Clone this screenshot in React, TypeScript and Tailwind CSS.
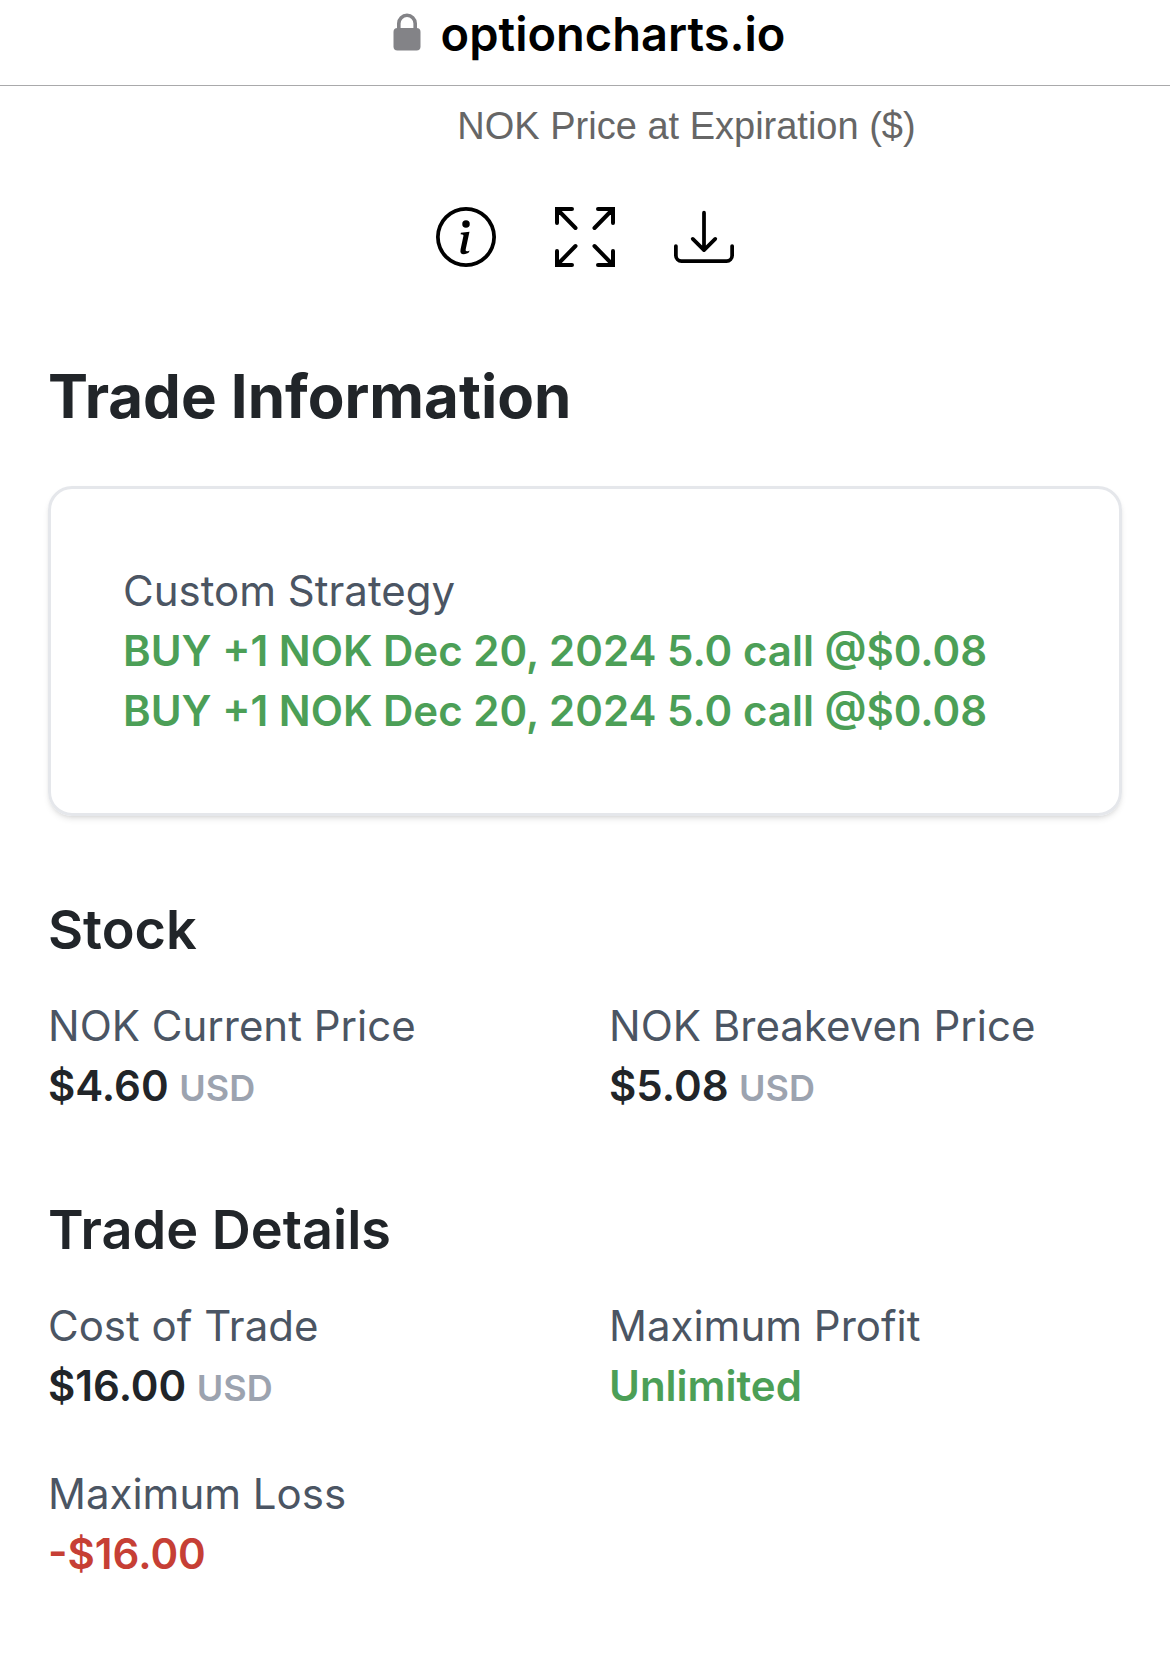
import { ReactNode } from 'react'

function LockIcon() {
  return (
    <svg viewBox="0 0 28 38" className="mt-px h-[38px] w-7" fill="none" aria-hidden="true">
      <rect x="0.5" y="15" width="27" height="22.5" rx="4" fill="#838387" />
      <path d="M5.8 17V10.5a8.2 8.2 0 0 1 16.4 0V17" stroke="#838387" strokeWidth="3.6" />
    </svg>
  )
}

function InfoIcon() {
  return (
    <svg viewBox="0 0 16 16" className="size-[60px]" fill="currentColor" aria-hidden="true">
      <path d="M8 15A7 7 0 1 1 8 1a7 7 0 0 1 0 14m0 1A8 8 0 1 0 8 0a8 8 0 0 0 0 16" />
      <path d="m8.93 6.588-2.29.287-.082.38.45.083c.294.07.352.176.288.469l-.738 3.468c-.194.897.105 1.319.808 1.319.545 0 1.178-.252 1.465-.598l.088-.416c-.2.176-.492.246-.686.246-.275 0-.375-.193-.304-.533zM9 4.5a1 1 0 1 1-2 0 1 1 0 0 1 2 0" />
    </svg>
  )
}

function ExpandIcon() {
  return (
    <svg
      viewBox="0 0 60 60"
      className="size-[60px]"
      fill="none"
      stroke="currentColor"
      strokeWidth="4"
      strokeLinecap="round"
      aria-hidden="true"
    >
      <path d="M2 16V2h15M2 2l18.500 19M43 2h15v14M58 2 39.500 21M2 44v14h15M2 58l18.500-19M43 58h15V44M58 58 39.500 39" />
    </svg>
  )
}

function DownloadIcon() {
  return (
    <svg viewBox="0 0 16 16" className="size-[60px]" fill="currentColor" aria-hidden="true">
      <path d="M.5 9.9a.5.5 0 0 1 .5.5v2.5a1 1 0 0 0 1 1h12a1 1 0 0 0 1-1v-2.5a.5.5 0 0 1 1 0v2.5a2 2 0 0 1-2 2H2a2 2 0 0 1-2-2v-2.5a.5.5 0 0 1 .5-.5" />
      <path d="M7.646 11.854a.5.5 0 0 0 .708 0l3-3a.5.5 0 0 0-.708-.708L8.5 10.293V1.5a.5.5 0 0 0-1 0v8.793L5.354 8.146a.5.5 0 1 0-.708.708z" />
    </svg>
  )
}

const legs = [
  { id: 1, text: 'BUY +1 NOK Dec 20, 2024 5.0 call @$0.08' },
  { id: 2, text: 'BUY +1 NOK Dec 20, 2024 5.0 call @$0.08' },
]

function Stat({ label, children }: { label: string; children: ReactNode }) {
  return (
    <div className="text-[42px] leading-[60px]">
      <dt className="text-[#4b5563]">{label}</dt>
      <dd className="font-semibold">{children}</dd>
    </div>
  )
}

function Usd() {
  return <span className="text-[36px] leading-none font-semibold text-[#9ca3af]">USD</span>
}

export default function App() {
  return (
    <div className="min-h-screen bg-white font-['Inter',sans-serif] text-[#212529]">
      <header className="flex h-[86px] items-start justify-center gap-5 border-b border-[#a9a9ab] pt-3 pl-2 text-black">
        <LockIcon />
        <span className="text-[47px] leading-[44px] font-semibold">optioncharts.io</span>
      </header>

      <main className="px-12">
        <p className="pt-4 pl-[203px] text-center font-['Liberation_Sans',sans-serif] text-[38px] leading-[48px] text-[#666]">
          NOK Price at Expiration ($)
        </p>

        <div className="mt-[57px] flex justify-center gap-[59px] text-black">
          <button type="button" aria-label="Chart info">
            <InfoIcon />
          </button>
          <button type="button" aria-label="Full screen">
            <ExpandIcon />
          </button>
          <button type="button" aria-label="Download">
            <DownloadIcon />
          </button>
        </div>

        <h1 className="mt-[93px] text-[60px] leading-[72px] font-bold">Trade Information</h1>

        <section className="mt-[54px] rounded-3xl border-3 border-[#e5e7eb] px-[72px] py-[72px] text-[42px] leading-[60px] shadow-md">
          <p className="text-[#4b5563]">Custom Strategy</p>
          {legs.map((leg) => (
            <p key={leg.id} className="font-semibold text-[#4c9f57]">
              {leg.text}
            </p>
          ))}
        </section>

        <h2 className="mt-20 text-[54px] leading-[68px] font-semibold">Stock</h2>
        <dl className="mt-8 grid grid-cols-2 gap-12">
          <Stat label="NOK Current Price">
            $4.60 <Usd />
          </Stat>
          <Stat label="NOK Breakeven Price">
            $5.08 <Usd />
          </Stat>
        </dl>

        <h2 className="mt-20 text-[54px] leading-[68px] font-semibold">Trade Details</h2>
        <dl className="mt-8 grid grid-cols-2 gap-12">
          <Stat label="Cost of Trade">
            $16.00 <Usd />
          </Stat>
          <Stat label="Maximum Profit">
            <span className="text-[#4c9f57]">Unlimited</span>
          </Stat>
          <Stat label="Maximum Loss">
            <span className="text-[#c63f35]">-$16.00</span>
          </Stat>
        </dl>
      </main>
    </div>
  )
}
